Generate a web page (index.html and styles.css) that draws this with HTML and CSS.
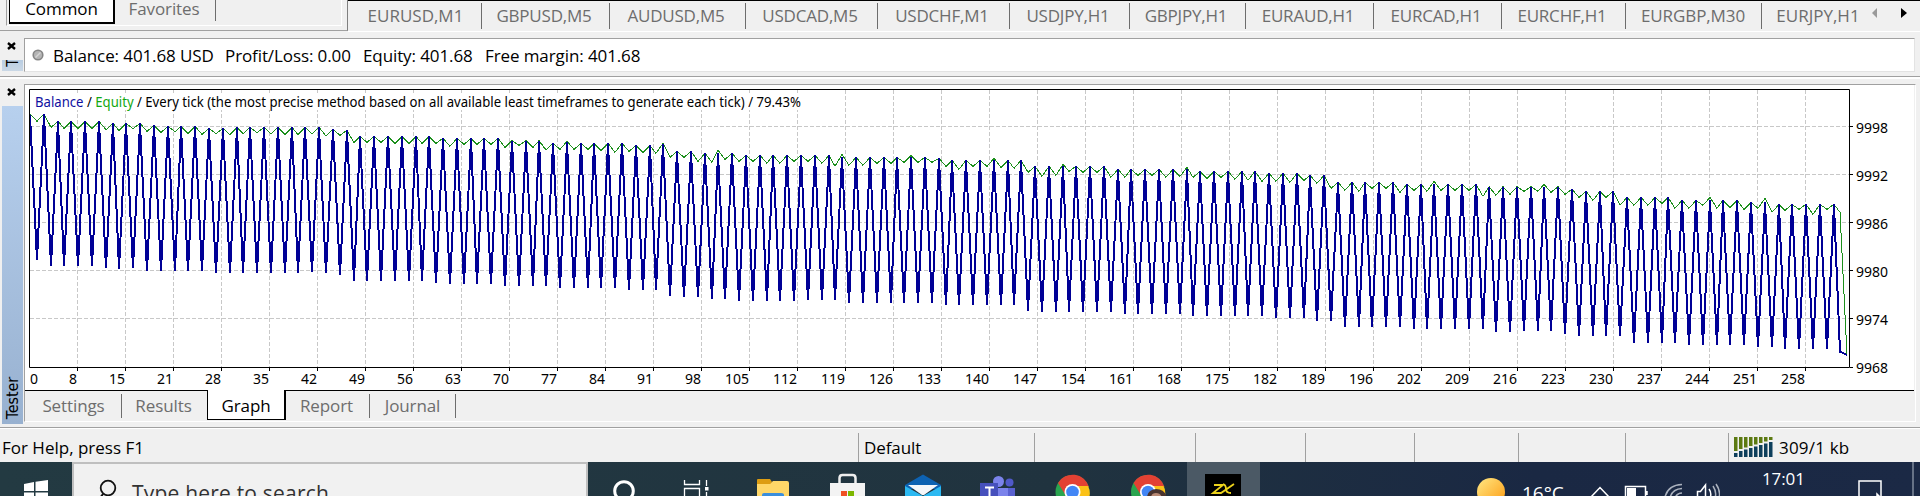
FILE: index.html
```html
<!DOCTYPE html>
<html lang="en">
<head>
    <meta charset="UTF-8">
    <title>Strategy Tester</title>
    <link rel="stylesheet" href="styles.css">
</head>
<body>
    <div class="top-row">
        <div class="navigator">
            <div class="nav-tabs">
                <span class="nav-tab active">Common</span>
                <span class="nav-tab">Favorites</span>
            </div>
        </div>
        <div class="symbols">
            <span class="symbol">EURUSD,M1</span>
            <span class="symbol">GBPUSD,M5</span>
            <span class="symbol">AUDUSD,M5</span>
            <span class="symbol">USDCAD,M5</span>
            <span class="symbol">USDCHF,M1</span>
            <span class="symbol">USDJPY,H1</span>
            <span class="symbol">GBPJPY,H1</span>
            <span class="symbol">EURAUD,H1</span>
            <span class="symbol">EURCAD,H1</span>
            <span class="symbol">EURCHF,H1</span>
            <span class="symbol">EURGBP,M30</span>
            <span class="symbol">EURJPY,H1</span>
            <svg class="arrows" width="40" height="12">
                <path d="M6 1v10L1 6z" fill="#9a9a9a"/>
                <path d="M30 1v10l6-5z" fill="#000"/>
            </svg>
        </div>
    </div>

    <div class="terminal">
        <div class="grip">
            <svg class="close" width="9" height="8"><path d="M1 1l7 6M8 1L1 7" stroke="#000" stroke-width="2.4"/></svg>
            <div class="grip-bar small"><span class="grip-name">T</span></div>
        </div>
        <div class="terminal-box">
            <svg class="dot" width="12" height="12"><circle cx="6" cy="6" r="4.8" fill="#b4b4b4" stroke="#858585" stroke-width="1.6"/><path d="M3.5 8.5l5-5" stroke="#d4d4d4" stroke-width="1.5"/></svg>
            <span class="money balance">Balance: 401.68 USD</span>
            <span class="money profit">Profit/Loss: 0.00</span>
            <span class="money equity">Equity: 401.68</span>
            <span class="money">Free margin: 401.68</span>
        </div>
    </div>

    <div class="tester">
        <div class="grip">
            <svg class="close" width="9" height="8"><path d="M1 1l7 6M8 1L1 7" stroke="#000" stroke-width="2.4"/></svg>
            <div class="grip-bar"><span class="grip-name">Tester</span></div>
        </div>
        <div class="tester-box">
            <svg class="chart" id="chart" width="1889" height="305" viewBox="25 85 1889 305">
                <g id="grid"></g>
                <rect x="34" y="93" width="768" height="17" fill="#fff"/>
                <text class="title" x="35" y="107" textLength="766" lengthAdjust="spacingAndGlyphs"><tspan>Balance</tspan> / <tspan>Equity</tspan> / Every tick (the most precise method based on all available least timeframes to generate each tick) / 79.43%</text>
                <polyline id="equityLine" class="equity-line"/>
                <polyline id="balanceLine" class="balance-line"/>
                <path class="frame" d="M29.5 367.5V89.5H1849.5V367.5H29.5"/>
                <g id="axis"></g>
            </svg>
            <div class="tester-tabs">
                <span class="tab">Settings</span>
                <span class="tab">Results</span>
                <span class="tab active">Graph</span>
                <span class="tab">Report</span>
                <span class="tab">Journal</span>
            </div>
        </div>
    </div>

    <div class="status">
        <span class="cell help">For Help, press F1</span>
        <span class="cell">Default</span>
        <span class="cell"></span>
        <span class="cell"></span>
        <span class="cell"></span>
        <span class="cell"></span>
        <span class="cell"></span>
        <span class="cell"></span>
        <span class="cell net"><svg id="bars" width="39" height="20"></svg>309/1 kb</span>
    </div>

    <div class="taskbar">
        <div class="start">
            <svg width="24" height="24"><path fill="#fff" d="M0 4l10-2v9H0zM11.5 1.8L24 0v11H11.5zM0 12.5h10V22L0 20.5zM11.5 12.5H24V24l-12.5-2z"/></svg>
        </div>
        <div class="search">
            <svg width="20" height="28"><circle cx="11" cy="9" r="7.3" fill="none" stroke="#111" stroke-width="1.8"/><path d="M6 15l-6 8" stroke="#111" stroke-width="2"/></svg>
            <span class="search-text">Type here to search</span>
        </div>
        <!-- pinned applications -->
        <svg class="apps" width="602" height="34" viewBox="588 462 602 34">
            <circle cx="624" cy="491" r="9.3" fill="none" stroke="#fff" stroke-width="3"/>
            <g fill="none" stroke="#fff" stroke-width="1.3">
                <path d="M684.5 480v4.5h15V480M684.5 498v-9.5h15v9.5M706.5 480v6M706.5 492v6"/>
            </g>
            <rect x="705" y="487" width="3.5" height="3.5" fill="#fff"/>
            <path d="M757 483v-3q0-1 1-1h12l2 3-2 3h-13z" fill="#dd9d12"/>
            <path d="M757 484h13l3-3h14q2 0 2 2v14h-32z" fill="#ffd768"/>
            <path d="M762 498v-3q0-2 2-2h17q3 0 3 2v3z" fill="#3b8edb"/>
            <path d="M839.5 484v-6q0-3 3-3h10q3 0 3 3v6" fill="none" stroke="#eee" stroke-width="2.5"/>
            <path d="M830 483h35v15h-35z" fill="#f3f3f3"/>
            <path d="M841 491h6v6h-6z" fill="#f05023"/>
            <path d="M848 491h6v6h-6z" fill="#7db700"/>
            <path d="M905 485l18-10.5L941 485v4h-36z" fill="#0d62b2"/>
            <path d="M905 486l18 10 18-10v12h-36z" fill="#2cb9f2"/>
            <path d="M908 485h30l-14 10h-2z" fill="#f5f7fa"/>
            <circle cx="998.5" cy="481.5" r="5.5" fill="#7b83eb"/>
            <circle cx="1009.5" cy="482.5" r="4" fill="#5059c9"/>
            <path d="M1000 488h15v10h-15z" fill="#5961d0"/>
            <path d="M993 488h15v10h-15z" fill="#7b83eb"/>
            <path d="M980 483h18v15h-18z" fill="#4650bc"/>
            <path d="M985 487.5h9M989.5 487v9" stroke="#fff" stroke-width="2"/>
            <g id="chrome">
                <circle cx="1072.5" cy="492" r="17" fill="#2aa44f"/>
                <path d="M1058 483a17 17 0 0 1 31 4h-17l-6 9z" fill="#e34133"/>
                <path d="M1072 486h16q3 6 1 12h-14z" fill="#fbc116"/>
                <circle cx="1072.5" cy="492" r="8" fill="#fff"/>
                <circle cx="1072.5" cy="492" r="6.3" fill="#4286f5"/>
            </g>
            <use href="#chrome" x="75.5"/>
            <path d="M1147 498q0-8 9-9 9 0 11 9z" fill="#4a342f"/>
            <path d="M1151 498q0-5 5-5t6 5z" fill="#b98a75"/>
        </svg>
        <div class="app-active">
            <svg width="36" height="24" viewBox="0 0 36 24">
                <path d="M0 0h36v24H0z" fill="#000"/>
                <path d="M9 11h9L8 19h8L29 10M18 10q3 1 3 5t5 4" fill="none" stroke="#ecd21c" stroke-width="1.8"/>
            </svg>
        </div>
        <div class="tray">
            <svg width="28" height="18"><defs><linearGradient id="sun" x1="0" y1="0" x2="1" y2="1"><stop offset="0" stop-color="#ffe884"/><stop offset="1" stop-color="#fd9a10"/></linearGradient></defs><circle cx="14" cy="14" r="14" fill="url(#sun)"/></svg>
            <span class="temp">16°C</span>
            <svg class="tray-icons" width="130" height="14" viewBox="1590 482 130 14">
                <g fill="none" stroke="#fff" stroke-width="1.5">
                    <path d="M1591 497l9-9.5 9 9.5M1625.5 498v-11.5h20V498M1647 491v4"/>
                    <path d="M1697.5 498v-6.5h3l5-6.5v13M1709 489q3 4 1 9"/>
                    <path d="M1713 486q4 6 2 12M1716 484q5 7 3 14M1665 497q3-12 17-12.5M1670 498q2-9 12-9.5M1675 498q2-5 7-5" stroke="#aab1bd"/>
                </g>
                <path d="M1627 488h9v8h-9z" fill="#fff"/>
            </svg>
            <span class="clock">17:01</span>
            <svg class="note" width="24" height="18"><path d="M1 18V1h22v17M19 18v-4l4 4" fill="none" stroke="#fff" stroke-width="1.5"/></svg>
            <span class="desktop"></span>
        </div>
    </div>

    <script>
        // Offsets from the top of the plot, in thirds of a pixel: [value, how many in a row]
        const peaks = [[72,2],[94,4],[100,3],[106,1],[109,3],[115,2],[112,7],[118,1],[121,1],[139,6],[145,5],[152,3],[160,1],
            [157,1],[160,4],[166,2],[163,1],[184,2],[190,3],[196,7],[202,7],[205,1],[211,6],[229,6],[238,6],[244,5],[250,3],[256,2],
            [277,5],[283,6],[290,6],[298,1],[304,3],[322,4],[331,5],[337,2],[343,5]];
        const valleys = [[512,1],[530,4],[536,1],[539,1],[536,1],[545,5],[551,7],[548,1],[551,1],[557,1],[575,6],[581,1],[584,4],[590,4],
            [596,5],[602,3],[620,1],[623,2],[629,2],[635,5],[632,3],[641,7],[647,6],[665,1],[668,6],[674,5],[680,6],[686,3],[695,2],
            [713,5],[719,6],[728,2],[725,3],[734,1],[740,4],[761,4],[767,5],[773,2],[779,4],[788,1]];
        const equityLows = [94,112,115,115,115,119,122,116,124,127,125,131,133,131,134,131,128,131,134,134,131,138,136,158,157,157,160,
            160,160,160,169,163,163,163,172,166,172,180,178,178,178,181,187,184,187,190,202,202,214,217,208,214,214,220,220,214,
            214,220,229,226,226,220,220,217,217,217,229,238,229,229,232,235,247,259,256,244,247,247,262,262,256,256,262,259,262,
            265,262,268,271,274,274,277,271,280,295,301,304,295,295,307,301,304,301,301,301,319,316,313,304,304,307,313,322,331,
            322,346,346,346,340,355,355,346,355,352,358,355,367,361,358,373,358,367];
        const spikes = {78: 154, 92: 160, 100: 181, 118: 193, 128: 196, 140: 205, 150: 223, 168: 232, 204: 274, 220: 283, 244: 322, 252: 325};
        const labels = [8,15,21,28,35,42,49,56,63,70,77,84,91,98,105,112,119,126,133,140,147,154,161,168,175,182,189,196,202,209,216,223,230,237,244,251,258];

        const expand = runs => runs.flatMap(([v, n]) => Array(n).fill(v));
        const highs = expand(peaks);
        const lows = expand(valleys);
        const balance = [];
        const equity = [];

        for (let i = 0; i < 264; i++) {
            const x = Math.round(30 + i * 6.884);
            const k = i >> 1;
            if (i % 2 === 0) {
                balance.push(`${x},${91 + highs[k] / 3}`);
                equity.push(`${x},${90 + (spikes[i] || highs[k]) / 3}`);
            } else {
                balance.push(`${x},${89 + lows[k] / 3}`);
                equity.push(`${x},${90 + equityLows[k] / 3}`);
            }
        }
        balance.push('1847,355');
        equity.push('1847,355');
        document.getElementById("balanceLine").setAttribute("points", balance.join(" "));
        document.getElementById("equityLine").setAttribute("points", equity.join(" "));

        let grid = '';
        let axis = '<text x="30" y="384">0</text>';
        labels.forEach((label, i) => {
            const x = 77 + i * 48;
            grid += `<path d="M${x}.5 90V367"/>`;
            axis += `<path d="M${x}.5 368v3"/><text class="end" x="${x}" y="384">${label}</text>`;
        });
        for (let i = 0; i < 6; i++) {
            const y = 126 + i * 48;
            if (i < 5) {
                grid += `<path d="M30 ${y}.5H1849"/>`;
            }
            axis += `<path d="M1850 ${i < 5 ? y : 367}.5h3"/><text x="1856" y="${i < 5 ? y + 7 : 373}">${9998 - i * 6}</text>`;
        }
        document.getElementById("grid").innerHTML = grid;
        document.getElementById("axis").innerHTML = axis;

        // Connection strength bars
        let bars = '';
        [14, 12, 10.5, 9, 7.5, 6, 4.5, 3].forEach((h, i) => {
            bars += `<path fill="#5c7a12" d="M${i * 5} 0h3.5v${h}h-3.5z"/><path fill="#0e3f5c" d="M${i * 5} ${h + 2}h3.5V20h-3.5z"/>`;
        });
        document.getElementById("bars").innerHTML = bars;
    </script>
</body>
</html>
```
FILE: styles.css
```css
* {
    box-sizing: border-box;
}
body {
    margin: 0;
    width: 1920px;
    height: 496px;
    overflow: hidden;
    background: #f0f0f0;
    font-family: "Open Sans", "Noto Sans", sans-serif;
    font-size: 17px;
    letter-spacing: -0.1px;
    color: #000;
    white-space: nowrap;
    display: flex;
    flex-direction: column;
}
svg {
    display: block;
    flex: none;
}
.top-row {
    display: flex;
    height: 33px;
}
.navigator {
    width: 348px;
    height: 31px;
    padding-left: 6px;
    border-right: 1px solid #808080;
    border-bottom: 1px solid #a0a0a0;
}
.nav-tabs {
    display: flex;
    width: 336px;
    height: 26px;
    border-left: 1px solid #a0a0a0;
    border-right: 1px solid #fff;
    border-bottom: 1px solid #fff;
    padding-left: 2px;
}
.nav-tab {
    width: 101px;
    height: 21px;
    line-height: 18px;
    text-align: center;
    padding-right: 2px;
    color: #6d6d6d;
    border-right: 1px solid #6d6d6d;
}
.nav-tab.active {
    width: 106px;
    height: 24px;
    padding: 0;
    color: #000;
    background: #fff;
    border: 2px solid #000;
    border-top: 0;
    border-left-width: 1px;
}
.symbols {
    flex: 1;
    display: flex;
    height: 32px;
    border-top: 1px solid #000;
    border-bottom: 1px solid #fff;
}
.symbol {
    width: 128px;
    height: 26px;
    margin-top: 2px;
    line-height: 25px;
    text-align: center;
    letter-spacing: -0.2px;
    padding-right: 3px;
    color: #6d6d6d;
    border-right: 1px solid #6d6d6d;
}
.symbol:nth-child(1) { width: 134px; padding-left: 5px; letter-spacing: 0; }
.symbol:nth-child(3) { width: 136px; }
.symbol:nth-child(4), .symbol:nth-child(5) { width: 132px; }
.symbol:nth-child(6) { width: 120px; }
.symbol:nth-child(7) { width: 116px; }
.symbol:nth-child(10) { width: 124px; }
.symbol:nth-child(11) { width: 136px; padding-right: 1px; letter-spacing: -0.1px; }
.symbol:nth-child(12) { width: 110px; border-right: 0; padding-left: 5px; letter-spacing: 0; }
.arrows {
    margin: 6px 0 0 -1px;
}
.terminal {
    display: flex;
    height: 44px;
    padding-top: 5px;
    border-bottom: 1px solid #a0a0a0;
}
.grip {
    display: flex;
    flex-direction: column;
    width: 24px;
    padding: 4px 0 0 2px;
}
.close {
    margin: 0 0 10px 5px;
}
.grip-bar {
    flex: 1;
    width: 21px;
    padding-bottom: 5px;
    display: flex;
    align-items: flex-end;
    justify-content: center;
    background: linear-gradient(#b7d0ee, #98b1d0);
}
.grip-bar.small {
    flex: none;
    height: 11px;
    padding: 0 0 4px;
    overflow: hidden;
    background: linear-gradient(#b9cde2, #cad8e6);
}
.grip-name {
    writing-mode: vertical-rl;
    transform: rotate(180deg);
    font: 16px/18px "DejaVu Sans Condensed", "DejaVu Sans", sans-serif;
}
.terminal-box {
    display: flex;
    align-items: center;
    width: 1891px;
    height: 34px;
    padding: 0 0 0 7px;
    background: #fff;
    border: 1px solid #e3e3e3;
    border-top-color: #a0a0a0;
    border-left-color: #a0a0a0;
}
.dot {
    margin: 0 9px 0 0;
}
.balance {
    width: 172px;
}
.profit {
    width: 138px;
}
.equity {
    width: 122px;
}
.tester {
    display: flex;
    height: 351px;
    padding-top: 7px;
    border-top: 2px solid #fff;
    border-bottom: 1px solid #a0a0a0;
}
.tester .grip {
    height: 338px;
    padding-top: 2px;
}
.tester-box {
    width: 1892px;
    height: 338px;
    margin-top: -2px;
    border: 1px solid #fff;
    border-top-color: #a0a0a0;
    border-left-color: #a0a0a0;
}
.chart {
    background: #fff;
    letter-spacing: 0;
}
.chart text {
    font: 14px "Noto Sans", sans-serif;
    fill: #000;
}
.chart .title {
    font-size: 14.5px;
}
.chart .title tspan:first-child {
    fill: #1010a0;
}
.chart .title tspan:last-child {
    fill: #12a812;
}
.chart .end {
    text-anchor: end;
}
#grid path {
    stroke: #c8c8c8;
    stroke-dasharray: 4 2;
}
#axis path, .frame {
    stroke: #000;
    fill: none;
}
.equity-line {
    fill: none;
    stroke: #1c8f1c;
    stroke-width: 1;
    shape-rendering: crispEdges;
}
.balance-line {
    fill: none;
    stroke: #000096;
    stroke-width: 2;
    stroke-linejoin: round;
    shape-rendering: crispEdges;
}
.tester-tabs {
    display: flex;
    width: 1889px;
    height: 31px;
    border-top: 1px solid #000;
}
.tab {
    width: 85px;
    height: 24px;
    margin-top: 3px;
    line-height: 24px;
    text-align: center;
    color: #6d6d6d;
    border-right: 1px solid #6d6d6d;
}
.tab:first-child {
    width: 97px;
    padding-left: 1px;
}
.tab:nth-child(2) {
    border-right: 0;
    padding-right: 2px;
}
.tab.active {
    width: 79px;
    height: 30px;
    margin-top: -1px;
    line-height: 31px;
    color: #000;
    background: #fff;
    border: 1px solid #000;
    border-top: 0;
    border-right-width: 2px;
}
.tab:nth-child(4) {
    width: 84px;
    padding-right: 2px;
}
.tab:nth-child(5) {
    width: 86px;
}
.status {
    display: flex;
    height: 34px;
    padding-top: 4px;
    border-top: 1px solid #fff;
}
.cell {
    width: 104px;
    height: 29px;
    line-height: 29px;
    padding-left: 5px;
    border-right: 1px solid #a0a0a0;
}
.cell.help { width: 859px; padding-left: 2px; letter-spacing: 0; }
.cell:nth-child(2) { width: 176px; }
.cell:nth-child(3) { width: 161px; }
.cell:nth-child(4) { width: 110px; }
.cell:nth-child(5) { width: 109px; }
.cell:nth-child(7) { width: 107px; }
.cell:nth-child(8) { width: 103px; }
.cell.net {
    display: flex;
    width: 191px;
    border: 0;
    letter-spacing: 0.2px;
}
.net svg {
    margin: 4px 6px 0 0;
}
.taskbar {
    display: flex;
    height: 34px;
    overflow: hidden;
    background: linear-gradient(90deg, #233a42, #20333f 55%, #1a2843 80%, #1b2945);
}
.start {
    width: 72px;
    padding: 18px 0 0 24px;
}
.search {
    display: flex;
    width: 516px;
    height: 40px;
    padding: 15px 0 0 23px;
    background: #f1f1f1;
    border: 2px solid #bfbfbf;
}
.search-text {
    margin: 0 0 0 15px;
    font-size: 21px;
    line-height: 29px;
    letter-spacing: 0.2px;
    color: #333;
}
.apps {
    margin-right: -3px;
}
.app-active {
    width: 73px;
    height: 34px;
    padding: 12px 0 0 18px;
    background: #4b5965;
}
.tray {
    display: flex;
    flex: 1;
    padding-left: 217px;
    color: #fff;
}
.tray svg {
    margin-top: 16px;
}
.temp {
    width: 68px;
    margin: 0 0 0 17px;
    font-size: 19px;
    line-height: 62px;
    letter-spacing: 0;
}
.tray .tray-icons {
    margin: 20px 0 0 0;
}
.clock {
    width: 96px;
    margin: 5px 0 0 42px;
}
.tray .note {
    margin: 18px 0 0 0;
}
.desktop {
    margin-left: 30px;
    width: 2px;
    background: #667286;
}
```
